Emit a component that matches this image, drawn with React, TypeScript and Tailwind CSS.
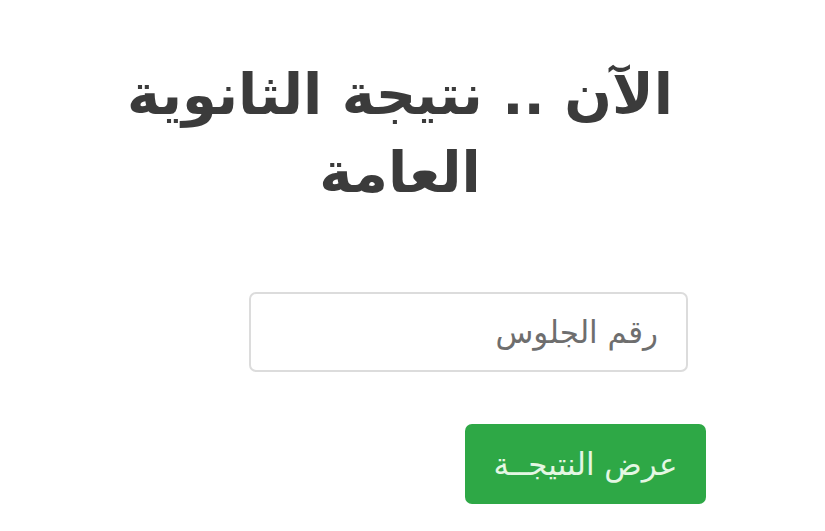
import React from "react";

export default function App() {
  return (
    <div
      dir="rtl"
      className="w-[825px] h-[531px] bg-white overflow-hidden flex flex-col"
      style={{ fontFamily: '"DejaVu Sans", "Noto Sans", sans-serif' }}
    >
      <div className="pt-[56px] flex justify-start pr-[115px]">
        <h1 className="w-[620px] text-center text-[56px] leading-[78px] font-bold text-[#3b3b3b]">
          الآن .. نتيجة الثانوية العامة
        </h1>
      </div>
      <div className="mt-[80px] flex flex-col items-start">
        <div className="mr-[137px] w-[439px] h-[80px] rounded-[7px] border-2 border-[#dcdcdc] bg-white flex items-center pr-[28px]">
          <span className="text-[31px] text-[#6e6e6e]">رقم الجلوس</span>
        </div>
        <button className="mt-[52px] mr-[119px] w-[241px] h-[80px] rounded-[7px] bg-[#2ea846] flex items-center justify-center">
          <span className="text-[31px] text-[#e4f7e4]">عرض النتيجــة</span>
        </button>
      </div>
    </div>
  );
}
